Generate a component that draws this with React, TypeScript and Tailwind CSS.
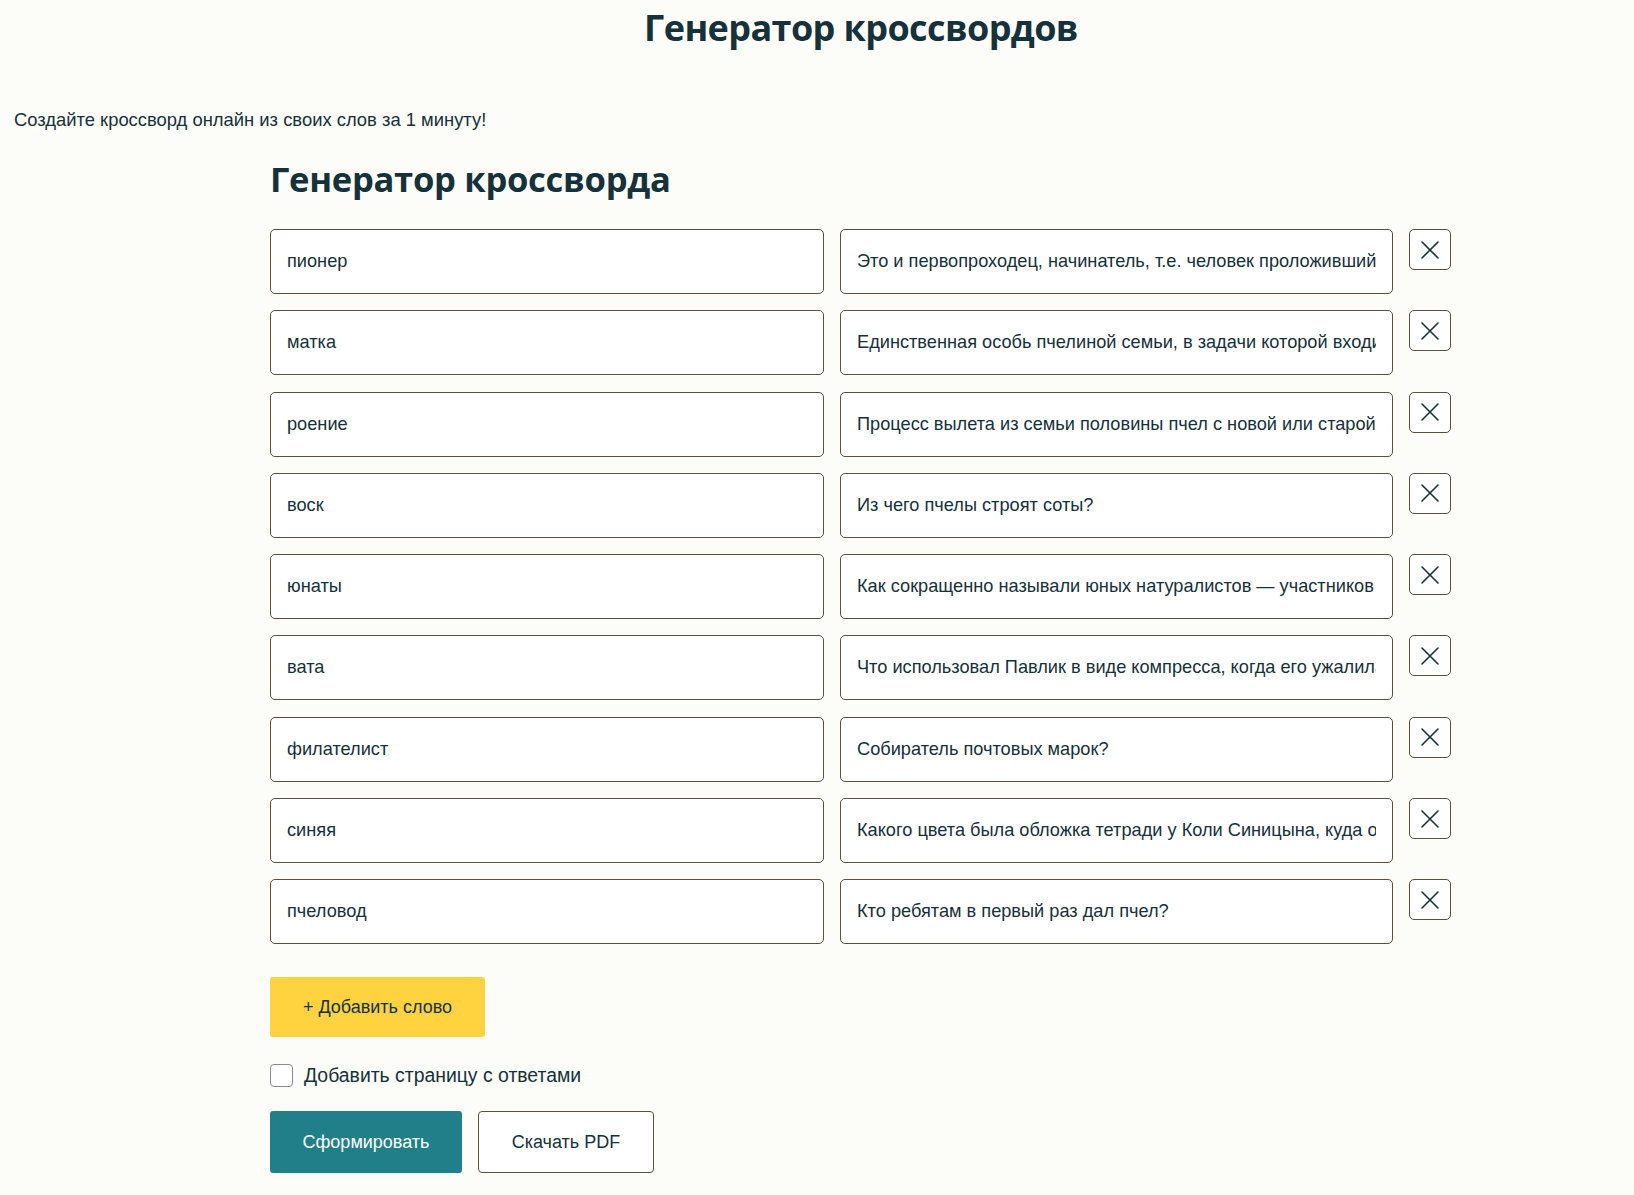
import { useState } from 'react';

const WORDS = [
  ['пионер', 'Это и первопроходец, начинатель, т.е. человек проложивший новый путь в науке?'],
  ['матка', 'Единственная особь пчелиной семьи, в задачи которой входит откладывание яиц?'],
  ['роение', 'Процесс вылета из семьи половины пчел с новой или старой маткой?'],
  ['воск', 'Из чего пчелы строят соты?'],
  ['юнаты', 'Как сокращенно называли юных натуралистов — участников кружка?'],
  ['вата', 'Что использовал Павлик в виде компресса, когда его ужалила пчела?'],
  ['филателист', 'Собиратель почтовых марок?'],
  ['синяя', 'Какого цвета была обложка тетради у Коли Синицына, куда он записывал дневник?'],
  ['пчеловод', 'Кто ребятам в первый раз дал пчел?'],
];

function CloseIcon() {
  return (
    <svg width="18" height="18" viewBox="0 0 18 18" fill="none" stroke="#15313a" strokeWidth="1.6" strokeLinecap="round">
      <path d="M1 1L17 17M17 1L1 17" />
    </svg>
  );
}

export default function App() {
  const [rows, setRows] = useState(WORDS);
  const [answers, setAnswers] = useState(false);

  const removeRow = (i: number) => setRows(rows.filter((_, j) => j !== i));
  const addRow = () => setRows([...rows, ['', '']]);

  return (
    <div className="min-h-[1195px] bg-[#fcfcf8] text-[#15313a] font-['Liberation_Sans',Arial,sans-serif]">
      <h1 className="pl-[88px] pt-[6px] text-center font-['Open_Sans',sans-serif] font-bold text-[36px] leading-[44px] tracking-[-0.6px] text-[#15313a]">
        Генератор кроссвордов
      </h1>
      <p className="mt-[58px] pl-[14px] text-[18.4px] leading-[24px]">
        Создайте кроссворд онлайн из своих слов за 1 минуту!
      </p>
      <div className="pl-[270px] pt-[23px]">
        <h2 className="font-['Open_Sans',sans-serif] font-bold text-[34.6px] leading-[48px] tracking-[-0.3px] text-[#15313a]">
          Генератор кроссворда
        </h2>
        <div className="mt-[26px] flex flex-col gap-[16.3px]">
          {rows.map(([word, clue], i) => (
            <div key={i} className="flex items-start gap-[16px]">
              <input
                defaultValue={word}
                className="w-[554px] h-[65px] px-[16px] bg-white border border-[#5c4f3f] rounded-[5px] text-[18.2px] text-[#15313a] outline-none"
              />
              <input
                defaultValue={clue}
                className="w-[553px] h-[65px] px-[16px] bg-white border border-[#5c4f3f] rounded-[5px] text-[18.2px] text-[#15313a] outline-none"
              />
              <button
                onClick={() => removeRow(i)}
                className="w-[42px] h-[41px] flex items-center justify-center bg-white border border-[#5c4f3f] rounded-[5px] cursor-pointer"
              >
                <CloseIcon />
              </button>
            </div>
          ))}
        </div>
        <button
          onClick={addRow}
          className="mt-[33px] w-[215px] h-[60px] bg-[#ffd240] rounded-[3px] text-[18px] text-[#15313a] cursor-pointer"
        >
          + Добавить слово
        </button>
        <label className="mt-[26px] flex items-center gap-[11px] cursor-pointer">
          <input
            type="checkbox"
            checked={answers}
            onChange={(e) => setAnswers(e.target.checked)}
            className="appearance-none w-[23px] h-[23px] bg-white border border-[#8a8a8a] rounded-[4px] checked:bg-[#217f8a]"
          />
          <span className="text-[19.4px] leading-[24px] text-[#15313a]">Добавить страницу с ответами</span>
        </label>
        <div className="mt-[24px] flex gap-[16px]">
          <button className="w-[192px] h-[62px] bg-[#217f8a] rounded-[3px] text-[18px] text-white cursor-pointer">
            Сформировать
          </button>
          <button className="w-[176px] h-[62px] bg-white border border-[#5c4f3f] rounded-[4px] text-[18px] text-[#15313a] cursor-pointer">
            Скачать PDF
          </button>
        </div>
      </div>
    </div>
  );
}
